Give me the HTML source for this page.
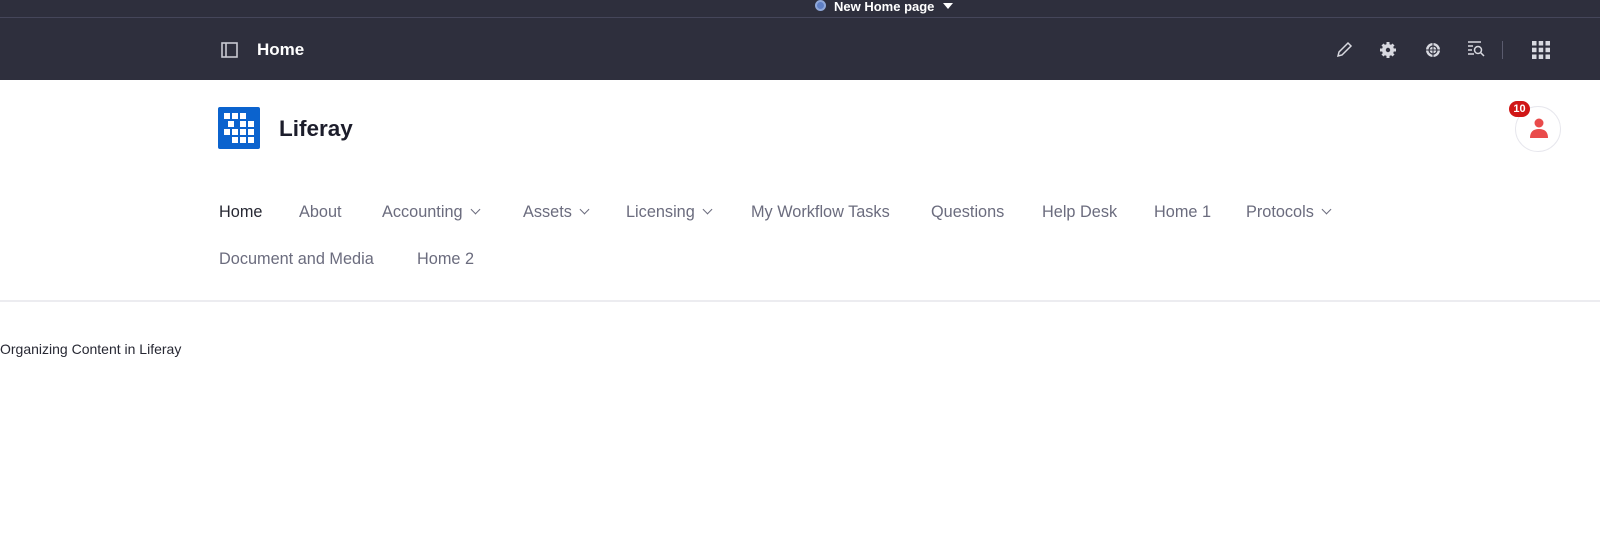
<!DOCTYPE html>
<html><head><style>
*{margin:0;padding:0;box-sizing:border-box}
body{width:1600px;height:533px;background:#fff;font-family:"Liberation Sans",sans-serif;position:relative;overflow:hidden}
.top{position:absolute;left:0;top:0;width:1600px;height:18px;background:#2e2f3d;border-bottom:1px solid #45465a}
.bar{position:absolute;left:0;top:18px;width:1600px;height:62px;background:#2e2f3d}
.abs{position:absolute}
.nav{position:absolute;font-size:16.3px;color:#6b6c7e;white-space:nowrap}
.chev{display:inline-block;width:7px;height:7px;border-right:1.3px solid #6b6c7e;border-bottom:1.3px solid #6b6c7e;transform:rotate(45deg);margin-left:9px;position:relative;top:-4px}
</style></head><body>
<div class="top"></div>
<div class="abs" style="left:815px;top:0;width:11px;height:11px;border-radius:50%;border:2px solid #8fa7d8;background:#5f7fc4"></div>
<div class="abs" style="left:834px;top:-1px;font-size:13px;font-weight:bold;color:#fff">New Home page</div>
<div class="abs" style="left:943px;top:3px;width:0;height:0;border-left:5px solid transparent;border-right:5px solid transparent;border-top:6px solid #fff"></div>
<div class="bar"></div>
<svg class="abs" style="left:221px;top:42px" width="17" height="16"><rect x="1" y="1" width="15" height="14" fill="none" stroke="#c9cad3" stroke-width="1.6"/><line x1="5" y1="1" x2="5" y2="15" stroke="#c9cad3" stroke-width="1.6"/></svg>
<div class="abs" style="left:257px;top:40px;font-size:17px;font-weight:bold;color:#fff">Home</div>
<svg class="abs" style="left:1335px;top:41px" width="18" height="18"><path d="M3 15 L4 11 L13 2 L16 5 L7 14 Z" fill="none" stroke="#d8d9e0" stroke-width="1.5"/></svg>
<svg class="abs" style="left:1379px;top:41px" width="18" height="18"><circle cx="9" cy="9" r="6" fill="#d8d9e0"/><g stroke="#d8d9e0" stroke-width="3"><line x1="9" y1="1" x2="9" y2="17"/><line x1="1" y1="9" x2="17" y2="9"/><line x1="3.5" y1="3.5" x2="14.5" y2="14.5"/><line x1="14.5" y1="3.5" x2="3.5" y2="14.5"/></g><circle cx="9" cy="9" r="2.2" fill="#2e2f3d"/></svg>
<svg class="abs" style="left:1424px;top:41px" width="18" height="18"><circle cx="9" cy="9" r="7" fill="#d8d9e0"/><circle cx="9" cy="9" r="4" fill="none" stroke="#2e2f3d" stroke-width="1.2"/><line x1="9" y1="1" x2="9" y2="17" stroke="#2e2f3d"/><line x1="1" y1="9" x2="17" y2="9" stroke="#2e2f3d"/></svg>
<svg class="abs" style="left:1467px;top:40px" width="18" height="18"><g stroke="#d8d9e0" stroke-width="1.5"><line x1="1" y1="2" x2="14" y2="2"/><line x1="1" y1="6" x2="6" y2="6"/><line x1="1" y1="10" x2="5" y2="10"/><line x1="1" y1="14" x2="7" y2="14"/><circle cx="11" cy="10" r="3.5" fill="none"/><line x1="13.5" y1="12.5" x2="17" y2="16"/></g></svg>
<div class="abs" style="left:1502px;top:41px;width:1px;height:18px;background:#5a5b6e"></div>
<svg class="abs" style="left:1532px;top:41px" width="18" height="18" fill="#d8d9e0"><rect x="0" y="0" width="4.5" height="4.5"/><rect x="6.7" y="0" width="4.5" height="4.5"/><rect x="13.5" y="0" width="4.5" height="4.5"/><rect x="0" y="6.7" width="4.5" height="4.5"/><rect x="6.7" y="6.7" width="4.5" height="4.5"/><rect x="13.5" y="6.7" width="4.5" height="4.5"/><rect x="0" y="13.5" width="4.5" height="4.5"/><rect x="6.7" y="13.5" width="4.5" height="4.5"/><rect x="13.5" y="13.5" width="4.5" height="4.5"/></svg>
<svg class="abs" style="left:218px;top:107px" width="42" height="42"><rect width="42" height="42" rx="2" fill="#0b63ce"/><g fill="#fff"><rect x="6" y="6" width="6" height="6"/><rect x="14" y="6" width="6" height="6"/><rect x="22" y="6" width="6" height="6"/><rect x="10" y="14" width="6" height="6"/><rect x="6" y="22" width="6" height="6"/><rect x="14" y="22" width="6" height="6"/><rect x="22" y="14" width="6" height="6"/><rect x="22" y="22" width="6" height="6"/><rect x="30" y="22" width="6" height="6"/><rect x="30" y="14" width="6" height="6"/><rect x="14" y="30" width="6" height="6"/><rect x="22" y="30" width="6" height="6"/><rect x="30" y="30" width="6" height="6"/></g></svg>
<div class="abs" style="left:279px;top:116px;font-size:22.5px;font-weight:bold;color:#1c1d2b">Liferay</div>
<div class="abs" style="left:1515px;top:106px;width:46px;height:46px;border-radius:50%;border:1px solid #e7e7ed;background:#fff"></div>
<svg class="abs" style="left:1529px;top:117px" width="20" height="22" fill="#e94b4b"><circle cx="10" cy="6" r="4.5"/><path d="M1 21 Q1 12 10 12 Q19 12 19 21 Z"/></svg>
<div class="abs" style="left:1509px;top:101px;width:21px;height:16px;border-radius:8px;background:#d01616;color:#fff;font-size:11px;font-weight:bold;text-align:center;line-height:16px">10</div>
<div class="nav" style="left:219px;top:203px;color:#272833">Home</div>
<div class="nav" style="left:299px;top:203px">About</div>
<div class="nav" style="left:382px;top:203px">Accounting<span class="chev"></span></div>
<div class="nav" style="left:523px;top:203px">Assets<span class="chev"></span></div>
<div class="nav" style="left:626px;top:203px">Licensing<span class="chev"></span></div>
<div class="nav" style="left:751px;top:203px">My Workflow Tasks</div>
<div class="nav" style="left:931px;top:203px">Questions</div>
<div class="nav" style="left:1042px;top:203px">Help Desk</div>
<div class="nav" style="left:1154px;top:203px">Home 1</div>
<div class="nav" style="left:1246px;top:203px">Protocols<span class="chev"></span></div>
<div class="nav" style="left:219px;top:250px">Document and Media</div>
<div class="nav" style="left:417px;top:250px">Home 2</div>
<div class="abs" style="left:0;top:300px;width:1600px;height:2px;background:#ececf0"></div>
<div class="abs" style="left:0;top:341px;font-size:14px;color:#272833">Organizing Content in Liferay</div>
</body></html>
